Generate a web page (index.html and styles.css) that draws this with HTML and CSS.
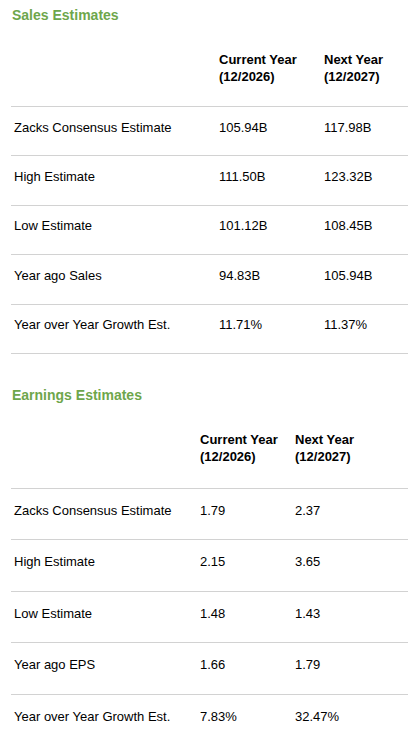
FILE: index.html
```html
<!DOCTYPE html>
<html lang="en">
<head>
<meta charset="utf-8">
<title>Estimates</title>
<link rel="stylesheet" href="styles.css">
</head>
<body>
<section class="block block-sales">
  <h2 class="title">Sales Estimates</h2>
  <table class="est est-sales">
    <colgroup>
      <col class="c-label">
      <col class="c-cur">
      <col class="c-next">
    </colgroup>
    <thead>
      <tr>
        <th></th>
        <th>Current Year<br>(12/2026)</th>
        <th>Next Year<br>(12/2027)</th>
      </tr>
    </thead>
    <tbody>
      <tr><td>Zacks Consensus Estimate</td><td>105.94B</td><td>117.98B</td></tr>
      <tr><td>High Estimate</td><td>111.50B</td><td>123.32B</td></tr>
      <tr><td>Low Estimate</td><td>101.12B</td><td>108.45B</td></tr>
      <tr><td>Year ago Sales</td><td>94.83B</td><td>105.94B</td></tr>
      <tr><td>Year over Year Growth Est.</td><td>11.71%</td><td>11.37%</td></tr>
    </tbody>
  </table>
</section>
<section class="block block-eps">
  <h2 class="title">Earnings Estimates</h2>
  <table class="est est-eps">
    <colgroup>
      <col class="c-label">
      <col class="c-cur">
      <col class="c-next">
    </colgroup>
    <thead>
      <tr>
        <th></th>
        <th>Current Year<br>(12/2026)</th>
        <th>Next Year<br>(12/2027)</th>
      </tr>
    </thead>
    <tbody>
      <tr><td>Zacks Consensus Estimate</td><td>1.79</td><td>2.37</td></tr>
      <tr><td>High Estimate</td><td>2.15</td><td>3.65</td></tr>
      <tr><td>Low Estimate</td><td>1.48</td><td>1.43</td></tr>
      <tr><td>Year ago EPS</td><td>1.66</td><td>1.79</td></tr>
      <tr><td>Year over Year Growth Est.</td><td>7.83%</td><td>32.47%</td></tr>
    </tbody>
  </table>
</section>
</body>
</html>
```

FILE: styles.css
```css
html {
  overflow: hidden;
  background: #ffffff;
}

body {
  margin: 0;
  padding: 0 0 0 11px;
  font-family: "Liberation Sans", Arial, sans-serif;
  color: #000000;
  background: #ffffff;
}

.block-sales {
  padding-top: 7px;
}

.block-eps {
  padding-top: 33px;
}

.title {
  margin: 0;
  padding-left: 1px;
  font-size: 14px;
  line-height: 16px;
  font-weight: bold;
  color: #6ea64b;
}

.est {
  width: 397px;
  margin-top: 16px;
  border-collapse: collapse;
  table-layout: fixed;
  font-size: 13px;
}

.est th {
  padding: 12px 3px 21px;
  text-align: left;
  vertical-align: top;
  font-weight: bold;
  line-height: 17px;
  border-bottom: 1px solid #d2d2d2;
}

.est td {
  padding: 12.6px 3px 20.8px;
  text-align: left;
  vertical-align: top;
  line-height: 15px;
  white-space: nowrap;
  border-bottom: 1px solid #d2d2d2;
}

.est-sales .c-label { width: 205px; }
.est-sales .c-cur { width: 105px; }
.est-sales .c-next { width: 87px; }

.est-eps .c-label { width: 186px; }
.est-eps .c-cur { width: 95px; }
.est-eps .c-next { width: 116px; }

.est-eps th {
  padding-bottom: 23px;
}

.est-eps td {
  padding-top: 14px;
  padding-bottom: 21.4px;
}
```
